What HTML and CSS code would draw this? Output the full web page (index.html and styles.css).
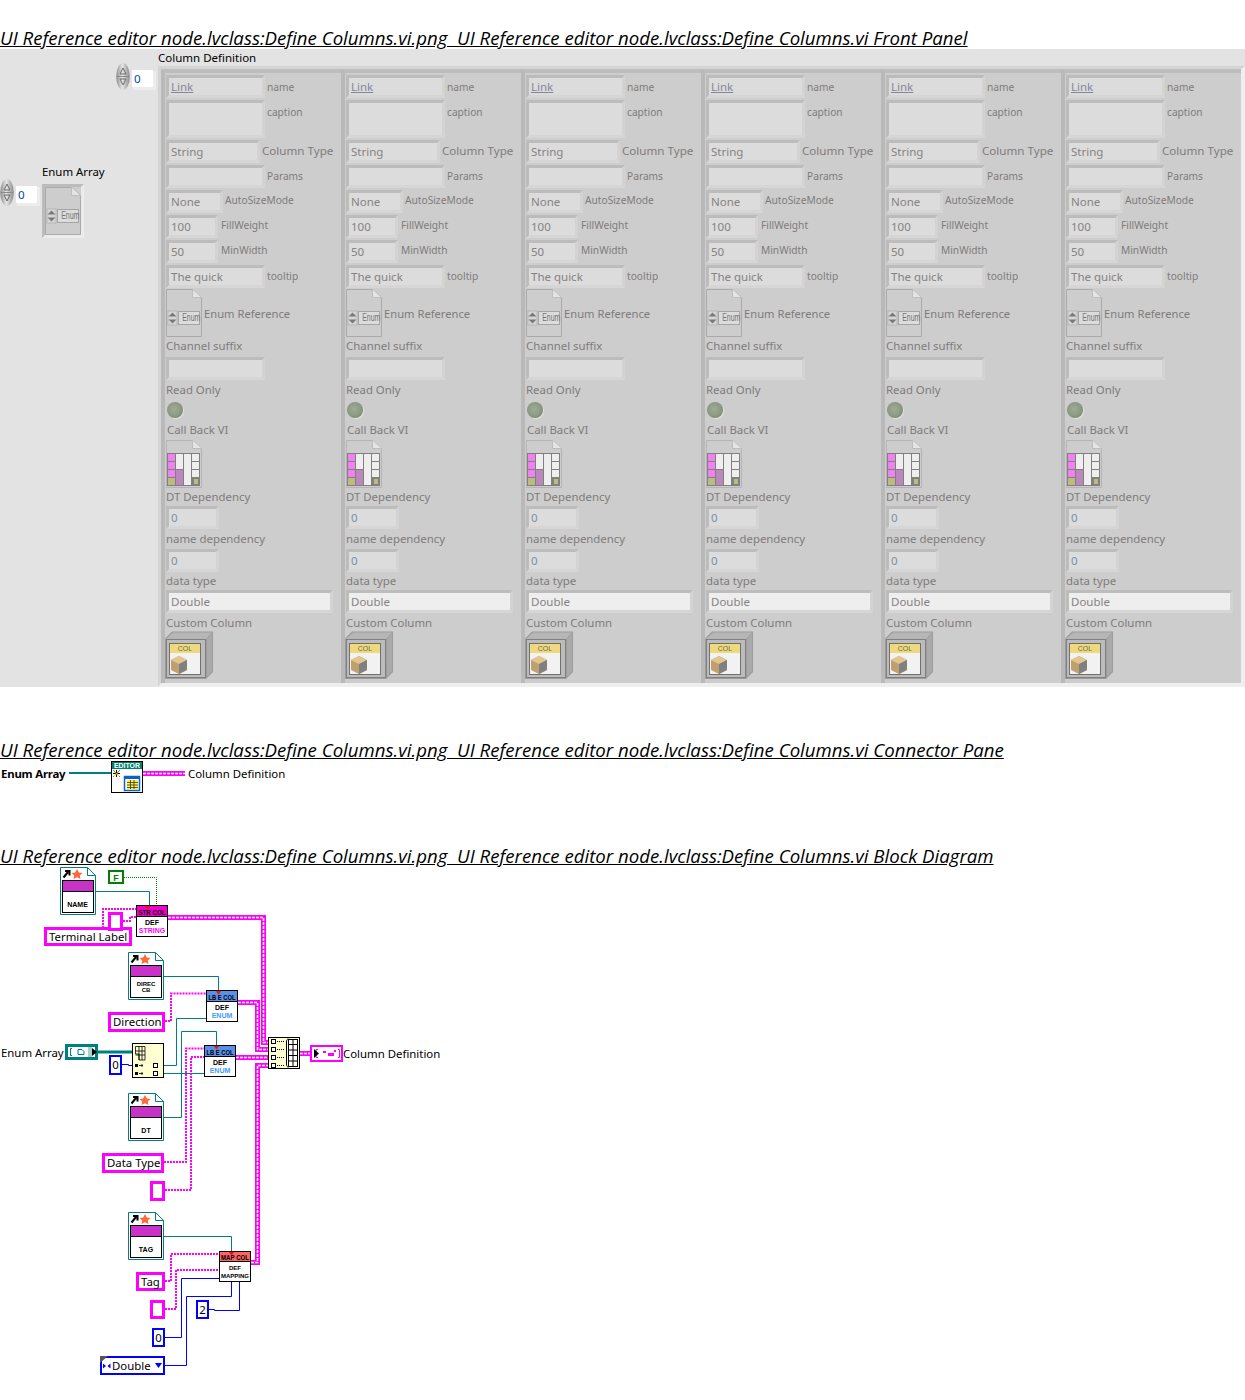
FILE: index.html
```html
<!DOCTYPE html>
<html lang="en">
<head>
<meta charset="utf-8">
<title>Define Columns.vi</title>
<link rel="stylesheet" href="styles.css">
</head>
<body>
<svg class="defs" width="0" height="0" aria-hidden="true">
  <defs>
    <linearGradient id="spinfill" x1="0" x2="1" y1="0" y2="0"><stop offset="0" stop-color="#8c8c8c"/><stop offset=".45" stop-color="#e6e6e6"/><stop offset="1" stop-color="#8a8a8a"/></linearGradient>
    <symbol id="spin" viewBox="0 0 14 27">
      <ellipse cx="7" cy="13.5" rx="6.8" ry="13.4" fill="url(#spinfill)"/>
      <line x1="1" x2="13" y1="13.5" y2="13.5" stroke="#8a8a8a"/>
      <path d="M7 5 L4 11 H10 Z M7 22 L4 16 H10 Z" fill="none" stroke="#6c6c6c"/>
    </symbol>
    <symbol id="enumdoc" viewBox="0 0 36 48">
      <path d="M.5 .5H26.5L35.5 8.5V47.5H.5Z" fill="#cdcdcd" stroke="#aaa"/>
      <path d="M26.5 .5V8.5H35.5" fill="#e4e4e4" stroke="#bdbdbd"/>
      <rect x="2" y="22" width="9" height="14" fill="#d6d6d6" stroke="#a4a4a4" stroke-width=".6"/>
      <path d="M6.5 23.500L2.500 27.500H10.500ZM6.500 34.500L2.500 30.500H10.500Z" fill="#7a7a7a"/>
      <rect x="12.5" y="22.5" width="21" height="13" fill="#dcdcdc" stroke="#a4a4a4"/>
    </symbol>
    <symbol id="tabledoc" viewBox="0 0 36 48">
      <path d="M.5 .5H26.5L35.5 8.5V47.5H.5Z" fill="#cdcdcd" stroke="#b4b4b4"/>
      <path d="M26.5 .5V8.5H35.5" fill="#e4e4e4" stroke="#bdbdbd"/>
      <rect x="1" y="13" width="33" height="33" fill="#808080"/>
      <rect x="2" y="14" width="7" height="7" fill="#ee82ee"/>
      <rect x="2" y="22" width="7" height="7" fill="#ee82ee"/>
      <rect x="2" y="30" width="7" height="7" fill="#ee82ee"/>
      <rect x="2" y="38" width="7" height="7" fill="#bcbc80"/>
      <rect x="10" y="14" width="7" height="15" fill="#eee"/>
      <rect x="10" y="30" width="7" height="15" fill="#bb88bb"/>
      <rect x="18" y="14" width="7" height="31" fill="#eee"/>
      <rect x="26" y="14" width="7" height="7" fill="#eee"/>
      <rect x="26" y="22" width="7" height="7" fill="#eee"/>
      <rect x="26" y="30" width="7" height="7" fill="#eee"/>
      <rect x="28" y="39" width="4" height="5" fill="#bcbc80"/>
    </symbol>
    <symbol id="colicon" viewBox="0 0 48 48">
      <path d="M0 7.5L7 .5H48V41L41 48H0Z" fill="#9c9c9c"/>
      <path d="M1 8L8 1.500H47L41 8Z" fill="#b6b6b6"/>
      <path d="M42 8L47 2V40L42 46Z" fill="#aaa"/>
      <rect x="1.500" y="8.500" width="39" height="38" fill="#bcbcbc" stroke="#808080"/>
      <rect x="4.500" y="12.500" width="31" height="31" fill="#f2f2f2" stroke="#707070"/>
      <rect x="5" y="13" width="30" height="9" fill="#eed97e"/>
      <path d="M6 29L14 25L22 29V39L14 43L6 39Z" fill="#bfa06e"/>
      <path d="M6 29L14 25L22 29L14 33Z" fill="#e2c68e"/>
      <path d="M14 33L22 29V39L14 43Z" fill="#808080"/>
    </symbol>
    <symbol id="refdoc" viewBox="0 0 36 48">
      <path d="M.5 .5H27.500L35.500 8.500V47.500H.5Z" fill="#fff" stroke="#007f7f"/>
      <path d="M27.500 .5V8.500H35.500" fill="none" stroke="#007f7f"/>
      <rect x="2.500" y="13.500" width="31" height="32" fill="#fff" stroke="#000"/>
      <rect x="3" y="14" width="30" height="10" fill="#c832c8"/>
      <line x1="3" x2="33" y1="24.500" y2="24.500" stroke="#000"/>
      <path d="M3.500 10.500L8 5M5 4H9.500V8.500" fill="none" stroke="#000" stroke-width="2"/>
      <path d="M17 2L18.800 5.500L22.500 6L19.800 8.500L20.500 12L17 10.300L13.500 12L14.200 8.500L11.500 6L15.200 5.500Z" fill="#ff6a3c"/>
    </symbol>
    <symbol id="redmark" viewBox="0 0 6 4"><path d="M0 0H6L3 4Z" fill="#f01010"/></symbol>
  </defs>
</svg>

<h2 class="title">UI Reference editor node.lvclass:Define Columns.vi.png&nbsp; UI Reference editor node.lvclass:Define Columns.vi Front Panel</h2>

<section class="fp">
  <div class="side">
    <div class="indexer top-index">
      <svg class="spin"><use href="#spin"/></svg>
      <div class="idx"><span>0</span></div>
    </div>
    <div class="side-label">Enum Array</div>
    <div class="enum-array">
      <div class="indexer">
        <svg class="spin"><use href="#spin"/></svg>
        <div class="idx"><span>0</span></div>
      </div>
      <div class="enum-frame">
        <div class="icon-doc"><svg class="doc"><use href="#enumdoc"/></svg><span class="enum-word">Enum</span></div>
      </div>
    </div>
  </div>
  <div class="main">
    <div class="main-label">Column Definition</div>
    <div class="panel">

      <article class="card">
        <div class="row"><div class="box w99 h23"><span class="val link">Link</span></div><span class="lab sm o5">name</span></div>
        <div class="row"><div class="box w99 h38"></div><span class="lab sm o5">caption</span></div>
        <div class="row"><div class="box w94 h23"><span class="val">String</span></div><span class="lab o4">Column Type</span></div>
        <div class="row"><div class="box w99 h23"></div><span class="lab sm o4">Params</span></div>
        <div class="row"><div class="box w57 h23"><span class="val">None</span></div><span class="lab sm o3">AutoSizeMode</span></div>
        <div class="row"><div class="box w52 h23"><span class="val">100</span></div><span class="lab sm o3">FillWeight</span></div>
        <div class="row"><div class="box w52 h23"><span class="val">50</span></div><span class="lab sm o3">MinWidth</span></div>
        <div class="row"><div class="box w99 h23"><span class="val">The quick</span></div><span class="lab sm o4">tooltip</span></div>
        <div class="row"><div class="icon-doc"><svg class="doc"><use href="#enumdoc"/></svg><span class="enum-word">Enum</span></div><span class="lab o18">Enum Reference</span></div>
        <div class="t">Channel suffix</div>
        <div class="row"><div class="box w99 h23"></div></div>
        <div class="t">Read Only</div>
        <div class="led"></div>
        <div class="t in1">Call Back VI</div>
        <svg class="doc"><use href="#tabledoc"/></svg>
        <div class="t">DT Dependency</div>
        <div class="row"><div class="box w53 h23"><span class="val num">0</span></div></div>
        <div class="t">name dependency</div>
        <div class="row"><div class="box w53 h23"><span class="val num">0</span></div></div>
        <div class="t">data type</div>
        <div class="row"><div class="box w167 h23 bright"><span class="val">Double</span></div></div>
        <div class="t">Custom Column</div>
        <div class="col-icon"><svg class="col-svg"><use href="#colicon"/></svg><span class="col-word">COL</span></div>
      </article>

      <article class="card">
        <div class="row"><div class="box w99 h23"><span class="val link">Link</span></div><span class="lab sm o5">name</span></div>
        <div class="row"><div class="box w99 h38"></div><span class="lab sm o5">caption</span></div>
        <div class="row"><div class="box w94 h23"><span class="val">String</span></div><span class="lab o4">Column Type</span></div>
        <div class="row"><div class="box w99 h23"></div><span class="lab sm o4">Params</span></div>
        <div class="row"><div class="box w57 h23"><span class="val">None</span></div><span class="lab sm o3">AutoSizeMode</span></div>
        <div class="row"><div class="box w52 h23"><span class="val">100</span></div><span class="lab sm o3">FillWeight</span></div>
        <div class="row"><div class="box w52 h23"><span class="val">50</span></div><span class="lab sm o3">MinWidth</span></div>
        <div class="row"><div class="box w99 h23"><span class="val">The quick</span></div><span class="lab sm o4">tooltip</span></div>
        <div class="row"><div class="icon-doc"><svg class="doc"><use href="#enumdoc"/></svg><span class="enum-word">Enum</span></div><span class="lab o18">Enum Reference</span></div>
        <div class="t">Channel suffix</div>
        <div class="row"><div class="box w99 h23"></div></div>
        <div class="t">Read Only</div>
        <div class="led"></div>
        <div class="t in1">Call Back VI</div>
        <svg class="doc"><use href="#tabledoc"/></svg>
        <div class="t">DT Dependency</div>
        <div class="row"><div class="box w53 h23"><span class="val num">0</span></div></div>
        <div class="t">name dependency</div>
        <div class="row"><div class="box w53 h23"><span class="val num">0</span></div></div>
        <div class="t">data type</div>
        <div class="row"><div class="box w167 h23 bright"><span class="val">Double</span></div></div>
        <div class="t">Custom Column</div>
        <div class="col-icon"><svg class="col-svg"><use href="#colicon"/></svg><span class="col-word">COL</span></div>
      </article>

      <article class="card">
        <div class="row"><div class="box w99 h23"><span class="val link">Link</span></div><span class="lab sm o5">name</span></div>
        <div class="row"><div class="box w99 h38"></div><span class="lab sm o5">caption</span></div>
        <div class="row"><div class="box w94 h23"><span class="val">String</span></div><span class="lab o4">Column Type</span></div>
        <div class="row"><div class="box w99 h23"></div><span class="lab sm o4">Params</span></div>
        <div class="row"><div class="box w57 h23"><span class="val">None</span></div><span class="lab sm o3">AutoSizeMode</span></div>
        <div class="row"><div class="box w52 h23"><span class="val">100</span></div><span class="lab sm o3">FillWeight</span></div>
        <div class="row"><div class="box w52 h23"><span class="val">50</span></div><span class="lab sm o3">MinWidth</span></div>
        <div class="row"><div class="box w99 h23"><span class="val">The quick</span></div><span class="lab sm o4">tooltip</span></div>
        <div class="row"><div class="icon-doc"><svg class="doc"><use href="#enumdoc"/></svg><span class="enum-word">Enum</span></div><span class="lab o18">Enum Reference</span></div>
        <div class="t">Channel suffix</div>
        <div class="row"><div class="box w99 h23"></div></div>
        <div class="t">Read Only</div>
        <div class="led"></div>
        <div class="t in1">Call Back VI</div>
        <svg class="doc"><use href="#tabledoc"/></svg>
        <div class="t">DT Dependency</div>
        <div class="row"><div class="box w53 h23"><span class="val num">0</span></div></div>
        <div class="t">name dependency</div>
        <div class="row"><div class="box w53 h23"><span class="val num">0</span></div></div>
        <div class="t">data type</div>
        <div class="row"><div class="box w167 h23 bright"><span class="val">Double</span></div></div>
        <div class="t">Custom Column</div>
        <div class="col-icon"><svg class="col-svg"><use href="#colicon"/></svg><span class="col-word">COL</span></div>
      </article>

      <article class="card">
        <div class="row"><div class="box w99 h23"><span class="val link">Link</span></div><span class="lab sm o5">name</span></div>
        <div class="row"><div class="box w99 h38"></div><span class="lab sm o5">caption</span></div>
        <div class="row"><div class="box w94 h23"><span class="val">String</span></div><span class="lab o4">Column Type</span></div>
        <div class="row"><div class="box w99 h23"></div><span class="lab sm o4">Params</span></div>
        <div class="row"><div class="box w57 h23"><span class="val">None</span></div><span class="lab sm o3">AutoSizeMode</span></div>
        <div class="row"><div class="box w52 h23"><span class="val">100</span></div><span class="lab sm o3">FillWeight</span></div>
        <div class="row"><div class="box w52 h23"><span class="val">50</span></div><span class="lab sm o3">MinWidth</span></div>
        <div class="row"><div class="box w99 h23"><span class="val">The quick</span></div><span class="lab sm o4">tooltip</span></div>
        <div class="row"><div class="icon-doc"><svg class="doc"><use href="#enumdoc"/></svg><span class="enum-word">Enum</span></div><span class="lab o18">Enum Reference</span></div>
        <div class="t">Channel suffix</div>
        <div class="row"><div class="box w99 h23"></div></div>
        <div class="t">Read Only</div>
        <div class="led"></div>
        <div class="t in1">Call Back VI</div>
        <svg class="doc"><use href="#tabledoc"/></svg>
        <div class="t">DT Dependency</div>
        <div class="row"><div class="box w53 h23"><span class="val num">0</span></div></div>
        <div class="t">name dependency</div>
        <div class="row"><div class="box w53 h23"><span class="val num">0</span></div></div>
        <div class="t">data type</div>
        <div class="row"><div class="box w167 h23 bright"><span class="val">Double</span></div></div>
        <div class="t">Custom Column</div>
        <div class="col-icon"><svg class="col-svg"><use href="#colicon"/></svg><span class="col-word">COL</span></div>
      </article>

      <article class="card">
        <div class="row"><div class="box w99 h23"><span class="val link">Link</span></div><span class="lab sm o5">name</span></div>
        <div class="row"><div class="box w99 h38"></div><span class="lab sm o5">caption</span></div>
        <div class="row"><div class="box w94 h23"><span class="val">String</span></div><span class="lab o4">Column Type</span></div>
        <div class="row"><div class="box w99 h23"></div><span class="lab sm o4">Params</span></div>
        <div class="row"><div class="box w57 h23"><span class="val">None</span></div><span class="lab sm o3">AutoSizeMode</span></div>
        <div class="row"><div class="box w52 h23"><span class="val">100</span></div><span class="lab sm o3">FillWeight</span></div>
        <div class="row"><div class="box w52 h23"><span class="val">50</span></div><span class="lab sm o3">MinWidth</span></div>
        <div class="row"><div class="box w99 h23"><span class="val">The quick</span></div><span class="lab sm o4">tooltip</span></div>
        <div class="row"><div class="icon-doc"><svg class="doc"><use href="#enumdoc"/></svg><span class="enum-word">Enum</span></div><span class="lab o18">Enum Reference</span></div>
        <div class="t">Channel suffix</div>
        <div class="row"><div class="box w99 h23"></div></div>
        <div class="t">Read Only</div>
        <div class="led"></div>
        <div class="t in1">Call Back VI</div>
        <svg class="doc"><use href="#tabledoc"/></svg>
        <div class="t">DT Dependency</div>
        <div class="row"><div class="box w53 h23"><span class="val num">0</span></div></div>
        <div class="t">name dependency</div>
        <div class="row"><div class="box w53 h23"><span class="val num">0</span></div></div>
        <div class="t">data type</div>
        <div class="row"><div class="box w167 h23 bright"><span class="val">Double</span></div></div>
        <div class="t">Custom Column</div>
        <div class="col-icon"><svg class="col-svg"><use href="#colicon"/></svg><span class="col-word">COL</span></div>
      </article>

      <article class="card">
        <div class="row"><div class="box w99 h23"><span class="val link">Link</span></div><span class="lab sm o5">name</span></div>
        <div class="row"><div class="box w99 h38"></div><span class="lab sm o5">caption</span></div>
        <div class="row"><div class="box w94 h23"><span class="val">String</span></div><span class="lab o4">Column Type</span></div>
        <div class="row"><div class="box w99 h23"></div><span class="lab sm o4">Params</span></div>
        <div class="row"><div class="box w57 h23"><span class="val">None</span></div><span class="lab sm o3">AutoSizeMode</span></div>
        <div class="row"><div class="box w52 h23"><span class="val">100</span></div><span class="lab sm o3">FillWeight</span></div>
        <div class="row"><div class="box w52 h23"><span class="val">50</span></div><span class="lab sm o3">MinWidth</span></div>
        <div class="row"><div class="box w99 h23"><span class="val">The quick</span></div><span class="lab sm o4">tooltip</span></div>
        <div class="row"><div class="icon-doc"><svg class="doc"><use href="#enumdoc"/></svg><span class="enum-word">Enum</span></div><span class="lab o18">Enum Reference</span></div>
        <div class="t">Channel suffix</div>
        <div class="row"><div class="box w99 h23"></div></div>
        <div class="t">Read Only</div>
        <div class="led"></div>
        <div class="t in1">Call Back VI</div>
        <svg class="doc"><use href="#tabledoc"/></svg>
        <div class="t">DT Dependency</div>
        <div class="row"><div class="box w53 h23"><span class="val num">0</span></div></div>
        <div class="t">name dependency</div>
        <div class="row"><div class="box w53 h23"><span class="val num">0</span></div></div>
        <div class="t">data type</div>
        <div class="row"><div class="box w167 h23 bright"><span class="val">Double</span></div></div>
        <div class="t">Custom Column</div>
        <div class="col-icon"><svg class="col-svg"><use href="#colicon"/></svg><span class="col-word">COL</span></div>
      </article>

    </div>
  </div>
</section>

<h2 class="title gap52">UI Reference editor node.lvclass:Define Columns.vi.png&nbsp; UI Reference editor node.lvclass:Define Columns.vi Connector Pane</h2>

<section class="conn">
  <b class="conn-left">Enum Array</b>
  <svg class="conn-svg" viewBox="69 761 116 33">
    <line class="w-teal2" x1="69" x2="111" y1="773" y2="773"/>
    <path class="p2a" d="M143 773.500H185"/><path class="p2b" d="M143 773.500H185"/>
    <rect x="111.500" y="761.500" width="31" height="31" fill="#fff" stroke="#000"/>
    <rect x="112" y="762" width="30" height="7" fill="#00806b"/>
    <text class="conn-head" x="127" y="768.300" textLength="26" lengthAdjust="spacingAndGlyphs">EDITOR</text>
    <path d="M113 773.500H120M116.500 770V777M113.500 770.500L119.500 776.500M119.500 770.500L113.500 776.500" stroke="#000" fill="none"/>
    <path d="M114 771.500L119 776M114 776L119 771.500" stroke="#ffe800" fill="none"/>
    <rect x="124.500" y="776.500" width="15" height="14" fill="#fff" stroke="#0a64c8" stroke-width="1.500"/>
    <rect x="124" y="776" width="16" height="3" fill="#0a64c8"/>
    <rect x="127" y="780" width="11" height="9" fill="#ffef3c"/>
    <path d="M127 782.500H138M127 785H138M127 787.500H138M130.500 780V789M134 780V789" stroke="#222" stroke-width=".7"/>
  </svg>
  <span class="conn-right">Column Definition</span>
</section>

<h2 class="title gap51">UI Reference editor node.lvclass:Define Columns.vi.png&nbsp; UI Reference editor node.lvclass:Define Columns.vi Block Diagram</h2>

<svg class="diagram" viewBox="0 867 1245 533">
  <!-- teal wires -->
  <path class="w-teal" d="M96 891.500H149.500V905"/>
  <path class="w-teal" d="M163 976.500H218.500V991"/>
  <path class="w-teal" d="M206 1018.500H176.500V1065.500H164"/>
  <path class="w-teal" d="M164 1073.500H204"/>
  <path class="w-teal" d="M163 1117.500H181.500V1031.500H216.500V1046"/>
  <path class="w-teal" d="M163 1236.500H231.500V1251"/>
  <path class="w-teal3" d="M97 1052H132"/>
  <!-- green -->
  <path class="w-green" d="M124 877.500H156.500V905"/>
  <!-- blue -->
  <path class="w-blue" d="M122 1064.500H128.500V1065.500H133"/>
  <path class="w-blue" d="M165 1337.500H181.500V1278.500H219"/>
  <path class="w-blue" d="M165 1365.500H186.500V1296.500H231.500V1282"/>
  <path class="w-blue" d="M209 1309.500H214.500V1310.500H239.500V1282"/>
  <!-- single pink -->
  <path class="w-pink" d="M103 928V909H136"/>
  <path class="w-pink" d="M123 921H130V917H136"/>
  <path class="w-pink" d="M165 1021H171V993.500H206"/>
  <path class="w-pink" d="M164 1162H186V1048.500H204"/>
  <path class="w-pink" d="M165 1190H191V1057H204"/>
  <path class="w-pink" d="M165 1281H171V1254H219"/>
  <path class="w-pink" d="M165 1309H176V1270H219"/>
  <!-- double pink -->
  <path class="p2a" d="M168 917.500H263.500V1042.500H268"/><path class="p2b" d="M168 917.500H263.500V1042.500H268"/>
  <path class="p2a" d="M238 1002.500H257.500V1049.500H268"/><path class="p2b" d="M238 1002.500H257.500V1049.500H268"/>
  <path class="p2a" d="M236 1057.500H268"/><path class="p2b" d="M236 1057.500H268"/>
  <path class="p2a" d="M251 1262.500H257.500V1065.500H268"/><path class="p2b" d="M251 1262.500H257.500V1065.500H268"/>
  <path class="p2a" d="M300 1053.500H310"/><path class="p2b" d="M300 1053.500H310"/>

  <!-- reference docs -->
  <use href="#refdoc" x="60" y="867" width="36" height="48"/><text class="tiny" x="77.500" y="907">NAME</text>
  <use href="#refdoc" x="128" y="952" width="36" height="48"/><text class="tiny tiny-s" x="146" y="985.500">DIREC</text><text class="tiny tiny-s" x="146" y="991.500">CB</text>
  <use href="#refdoc" x="128" y="1093" width="36" height="48"/><text class="tiny" x="146" y="1133">DT</text>
  <use href="#refdoc" x="128" y="1212" width="36" height="48"/><text class="tiny" x="146" y="1252">TAG</text>

  <!-- F constant -->
  <rect class="c-green" x="109" y="871" width="14" height="12"/><text class="f-word" x="116" y="880.500">F</text>

  <!-- subVIs -->
  <g>
    <rect class="vi" x="136.500" y="905.500" width="31" height="31"/>
    <rect x="137" y="906" width="30" height="10" fill="#f000c8"/><line x1="137" x2="167" y1="916.500" y2="916.500" stroke="#000"/>
    <text class="vi-h" x="152" y="914.500" textLength="27" lengthAdjust="spacingAndGlyphs">STR COL</text><text class="tiny" x="152" y="925">DEF</text><text class="tiny tiny-mag" x="152" y="933">STRING</text>
    <use href="#redmark" x="144.500" y="905.500" width="6" height="4"/>
  </g>
  <g>
    <rect class="vi" x="206.500" y="990.500" width="31" height="31"/>
    <rect x="207" y="991" width="30" height="10" fill="#5a8fe6"/><line x1="207" x2="237" y1="1001.500" y2="1001.500" stroke="#000"/>
    <text class="vi-h" x="222" y="999.500" textLength="27" lengthAdjust="spacingAndGlyphs">LB E COL</text><text class="tiny" x="222" y="1010">DEF</text><text class="tiny tiny-blue" x="222" y="1018">ENUM</text>
    <use href="#redmark" x="215.500" y="990.500" width="6" height="4"/>
  </g>
  <g>
    <rect class="vi" x="204.500" y="1045.500" width="31" height="31"/>
    <rect x="205" y="1046" width="30" height="10" fill="#5a8fe6"/><line x1="205" x2="235" y1="1056.500" y2="1056.500" stroke="#000"/>
    <text class="vi-h" x="220" y="1054.500" textLength="27" lengthAdjust="spacingAndGlyphs">LB E COL</text><text class="tiny" x="220" y="1065">DEF</text><text class="tiny tiny-blue" x="220" y="1073">ENUM</text>
    <use href="#redmark" x="213.500" y="1045.500" width="6" height="4"/>
  </g>
  <g>
    <rect class="vi" x="219.500" y="1251.500" width="31" height="30"/>
    <rect x="220" y="1252" width="30" height="9" fill="#ff6464"/><line x1="220" x2="250" y1="1261.500" y2="1261.500" stroke="#000"/>
    <text class="vi-h" x="235" y="1259.500" textLength="28" lengthAdjust="spacingAndGlyphs">MAP COL</text><text class="tiny tiny-s" x="235" y="1270">DEF</text><text class="tiny tiny-s" x="235" y="1278">MAPPING</text>
    <use href="#redmark" x="228.500" y="1251.500" width="6" height="4"/>
  </g>

  <!-- index array -->
  <rect class="prim" x="132.500" y="1043.500" width="31" height="34"/>
  <path d="M135.500 1046.500H145V1060H139V1054H135.500ZM135.500 1051H145M135.500 1055H145M139 1046.500V1060M142 1046.500V1060" fill="none" stroke="#000" stroke-width=".8"/>
  <rect x="135" y="1064" width="3" height="3" fill="#000"/><path d="M139 1065.500H143M142 1064V1067" stroke="#000" stroke-width=".8"/>
  <rect x="135" y="1072" width="3" height="3" fill="#000"/><path d="M139 1073.500H143M142 1072V1075" stroke="#000" stroke-width=".8"/>
  <rect x="153.500" y="1063.500" width="4" height="4" fill="#fff" stroke="#000"/><rect x="153.500" y="1071.500" width="4" height="4" fill="#fff" stroke="#000"/>

  <!-- bundle -->
  <rect class="prim" x="268.500" y="1037.500" width="31" height="31"/>
  <g fill="#fff" stroke="#000">
    <rect x="271.500" y="1039.500" width="4" height="4"/><rect x="271.500" y="1047.500" width="4" height="4"/><rect x="271.500" y="1055.500" width="4" height="4"/><rect x="271.500" y="1063.500" width="4" height="4"/>
  </g>
  <path d="M277 1041.500H284M277 1049.500H284M277 1057.500H284M277 1065.500H284" stroke="#000" stroke-dasharray="1 1"/>
  <path d="M288.500 1039V1067M288.500 1039C287 1039 286.500 1040 286.500 1042V1064C286.500 1066 287 1067 288.500 1067" stroke="#000" fill="none"/>
  <rect x="288.500" y="1039.500" width="9" height="27" fill="#fff" stroke="#000"/>
  <path d="M289 1044.500H297M289 1050H297M289 1055.500H297M289 1061H297M293 1040V1066" stroke="#000"/>

  <!-- constants with labels -->
  <rect class="c-pink" x="45.500" y="928.500" width="85" height="16"/><text class="lbl" x="49" y="941">Terminal Label</text>
  <rect class="c-pink" x="109.500" y="913.500" width="12" height="16"/>
  <rect class="c-pink" x="109.500" y="1013.500" width="54" height="17"/><text class="lbl" x="113" y="1026">Direction</text>
  <rect class="c-pink" x="103.500" y="1154.500" width="59" height="17"/><text class="lbl" x="107" y="1167">Data Type</text>
  <rect class="c-pink" x="151.500" y="1182.500" width="12" height="17"/>
  <rect class="c-pink" x="137.500" y="1273.500" width="26" height="16"/><text class="lbl" x="141" y="1286">Tag</text>
  <rect class="c-pink" x="151.500" y="1301.500" width="12" height="16"/>
  <rect class="c-blue" x="110" y="1056" width="11" height="18"/><text class="lbl lbl-c" x="115.500" y="1069">0</text>
  <rect class="c-blue" x="153" y="1329" width="11" height="17"/><text class="lbl lbl-c" x="158.500" y="1342">0</text>
  <rect class="c-blue" x="197" y="1301" width="11" height="17"/><text class="lbl lbl-c" x="202.500" y="1314">2</text>
  <rect class="c-blue" x="101" y="1357" width="63" height="17"/>
  <path d="M100 1356H108L100 1363Z" fill="#555"/>
  <path d="M106 1366L103 1363.500V1368.500ZM107.500 1366L110.500 1363.500V1368.500Z" fill="#0000ff"/>
  <text class="lbl" x="112" y="1370">Double</text>
  <path d="M155 1363H162L158.500 1368Z" fill="#0000ff"/>

  <!-- terminals -->
  <text class="lbl" x="1" y="1057">Enum Array</text>
  <rect class="t-teal" x="66.500" y="1045.500" width="30" height="13"/>
  <path d="M72 1048.500H70.500V1055.500H72M90 1048.500H91.500V1055.500H90" fill="none" stroke="#007f7f"/>
  <path d="M78 1049.500H82L84 1051.500V1054.500H78Z" fill="none" stroke="#007f7f"/>
  <rect x="88" y="1047" width="4" height="10" fill="#a9cfcf"/>
  <path d="M92 1048L97 1052L92 1056Z" fill="#000"/>
  <rect class="t-pink" x="311" y="1046" width="31" height="15"/>
  <path d="M318 1049.500H316V1057.500H318M338 1049.500H339.500V1057.500H338" fill="none" stroke="#ff00ff"/>
  <path d="M314 1049L319 1053.500L314 1058Z" fill="#000"/>
  <rect x="323" y="1051" width="3" height="2" fill="#ff00ff"/><rect x="328" y="1053" width="6" height="3" fill="#ff00ff"/><rect x="334" y="1050" width="2" height="2" fill="#ff00ff"/>
  <text class="lbl" x="343" y="1058">Column Definition</text>
</svg>
</body>
</html>
```

FILE: styles.css
```css
html, body { margin: 0; padding: 0; background: #fff; }
body { width: 1245px; height: 1400px; overflow: hidden; font-family: "Noto Sans", "Open Sans", sans-serif; color: #000; }
.defs { position: absolute; }

.title {
  margin: 27px 0 0;
  height: 22px;
  font: italic 400 18.64px/22px "Open Sans", "Noto Sans", sans-serif;
  text-decoration: underline;
  white-space: nowrap;
}
.gap52 { margin-top: 52px; }
.gap51 { margin-top: 51px; }

/* front panel */
.fp { display: flex; height: 638px; background: #e3e3e3; }
.side { width: 158px; flex: none; display: flex; flex-direction: column; }
.indexer { display: flex; align-items: flex-start; }
.top-index { margin: 14px 0 0 116px; }
.spin { width: 14px; height: 27px; display: block; }
.idx {
  margin: 7px 0 0 2px;
  width: 21px; height: 17px;
  background: #fff;
  box-shadow: 2px 2px 0 1px #ededed;
  font-size: 11.6px; line-height: 17px;
  color: #0048b4;
}
.idx span { margin-left: 2px; }
.side-label { margin: 75px 0 0 42px; font-size: 11.4px; line-height: 14px; height: 14px; }
.enum-array { display: flex; align-items: flex-start; }
.enum-frame {
  margin: 5px 0 0 5px;
  background: #cdcdcd;
  border-style: solid; border-width: 3px;
  border-color: #bcbcbc #ececec #ececec #bcbcbc;
  width: 36px; height: 48px;
}

.main { flex: none; width: 1087px; }
.main-label { height: 17px; font-size: 11.5px; line-height: 17px; }
.panel {
  display: flex;
  height: 614px;
  border-style: solid;
  border-width: 3px 4px 4px 3px;
  border-color: #d4d4d4 #efefef #efefef #d4d4d4;
}
.card {
  box-sizing: border-box;
  width: 180px; height: 614px; flex: none;
  background: #cdcdcd;
  border-left: 4px solid #b9b9b9;
  border-top: 4px solid #bdbdbd;
  padding: 2px 0 4px 1px;
  display: grid;
  grid-template-rows: 25px 40px 25px 25px 25px 25px 25px 24px 49px 19px 25px 20px 20px 18px 49px 17px 25px 18px 24px 17px 25px 16px 48px;
  color: #7f7b7b;
}
.row { display: flex; align-items: flex-start; }
.box {
  box-sizing: border-box;
  border-style: solid; border-width: 3px;
  border-color: #bcbcbc #d3d3d3 #d6d6d6 #bcbcbc;
  background: #dcdcdc;
  flex: none;
}
.bright { background: #eeeeee; }
.w99 { width: 99px; } .w94 { width: 94px; } .w57 { width: 57px; } .w52 { width: 52px; } .w53 { width: 53px; } .w167 { width: 167px; }
.h23 { height: 23px; } .h38 { height: 38px; }
.val { display: block; padding-left: 2px; font-size: 11.5px; line-height: 17px; color: #868282; white-space: nowrap; }
.link { text-decoration: underline; color: #86869a; }
.num { color: #7c90a6; }
.lab { display: block; font-size: 11.6px; line-height: 14px; margin-left: 2px; white-space: nowrap; }
.w52 + .lab { margin-left: 3px; }
.sm { font-size: 10.2px; }
.o3 { margin-top: 3px; } .o4 { margin-top: 4px; } .o5 { margin-top: 5px; } .o18 { margin-top: 18px; font-size: 11.2px; }
.t { font-size: 11.4px; line-height: 16px; white-space: nowrap; height: 16px; }
.in1 { margin-left: 1px; }
.doc { display: block; width: 36px; height: 48px; }
.icon-doc { position: relative; width: 36px; height: 48px; flex: none; }
.enum-word {
  position: absolute; left: 12.5px; top: 22px; width: 21px;
  font: 400 10px/14px "Liberation Sans", sans-serif;
  text-align: center; color: #757575;
  transform: scaleX(.7);
}
.led {
  width: 16px; height: 16px; margin-left: 1px; border-radius: 50%;
  background: radial-gradient(circle at 45% 45%, #a0ab97 0, #8b9a82 55%, #75836d 80%, #8f9a88 100%);
  box-shadow: 1px 1px 1px #e2e2e2;
}
.col-icon { position: relative; width: 48px; height: 48px; margin-left: -1px; }
.col-svg { display: block; width: 48px; height: 48px; }
.col-word {
  position: absolute; left: 5px; top: 13px; width: 30px;
  font: 400 7px/9px "Liberation Sans", sans-serif;
  text-align: center; color: #6d6d4a;
}

/* connector */
.conn { display: flex; align-items: flex-start; height: 33px; margin: 0; }
.conn-left { width: 69px; flex: none; font-size: 11.4px; line-height: 16px; margin-top: 5px; padding-left: 1px; box-sizing: border-box; white-space: nowrap; font-weight: 700; letter-spacing: -.2px; }
.conn-svg { width: 116px; height: 33px; flex: none; display: block; }
.conn-right { font-size: 11.4px; line-height: 16px; margin: 5px 0 0 3px; white-space: nowrap; }
.conn-head { font: 700 7px "Liberation Sans", sans-serif; fill: #fff; text-anchor: middle; }

/* block diagram */
.diagram { display: block; width: 1245px; height: 533px; }
.w-teal { fill: none; stroke: #007f7f; stroke-width: 1; }
.w-teal2 { stroke: #007f7f; stroke-width: 2; }
.w-teal3 { fill: none; stroke: #007f7f; stroke-width: 3; }
.w-green { fill: none; stroke: #008000; stroke-width: 1; stroke-dasharray: 1 1; }
.w-blue { fill: none; stroke: #0000ff; stroke-width: 1; }
.w-pink { fill: none; stroke: #ff00ff; stroke-width: 2; stroke-dasharray: 2 1; }
.p2a { fill: none; stroke: #ff00ff; stroke-width: 5; }
.p2b { fill: none; stroke: #fff; stroke-width: 1.500; stroke-dasharray: 3 1; }
.vi { fill: #fff; stroke: #000; }
.prim { fill: #ffffd2; stroke: #000; }
.c-pink { fill: #fff; stroke: #ff00ff; stroke-width: 3; }
.c-blue { fill: #fff; stroke: #0000ff; stroke-width: 2; }
.c-green { fill: #fff; stroke: #008000; stroke-width: 2; }
.t-teal { fill: #fff; stroke: #007f7f; stroke-width: 3; }
.t-pink { fill: #fff; stroke: #ff00ff; stroke-width: 2; }
.lbl { font: 400 11.4px "Noto Sans", sans-serif; fill: #000; }
.lbl-c { text-anchor: middle; }
.tiny { font: 700 7px "Liberation Sans", sans-serif; fill: #000; text-anchor: middle; }
.tiny-mag { fill: #ff00ff; }
.tiny-blue { fill: #3f9cff; }
.tiny-s { font-size: 6px; }
.vi-h { font: 700 7px "Liberation Sans", sans-serif; fill: #000; text-anchor: middle; }
.f-word { font: 700 9px "Liberation Sans", sans-serif; fill: #008000; text-anchor: middle; }
```
